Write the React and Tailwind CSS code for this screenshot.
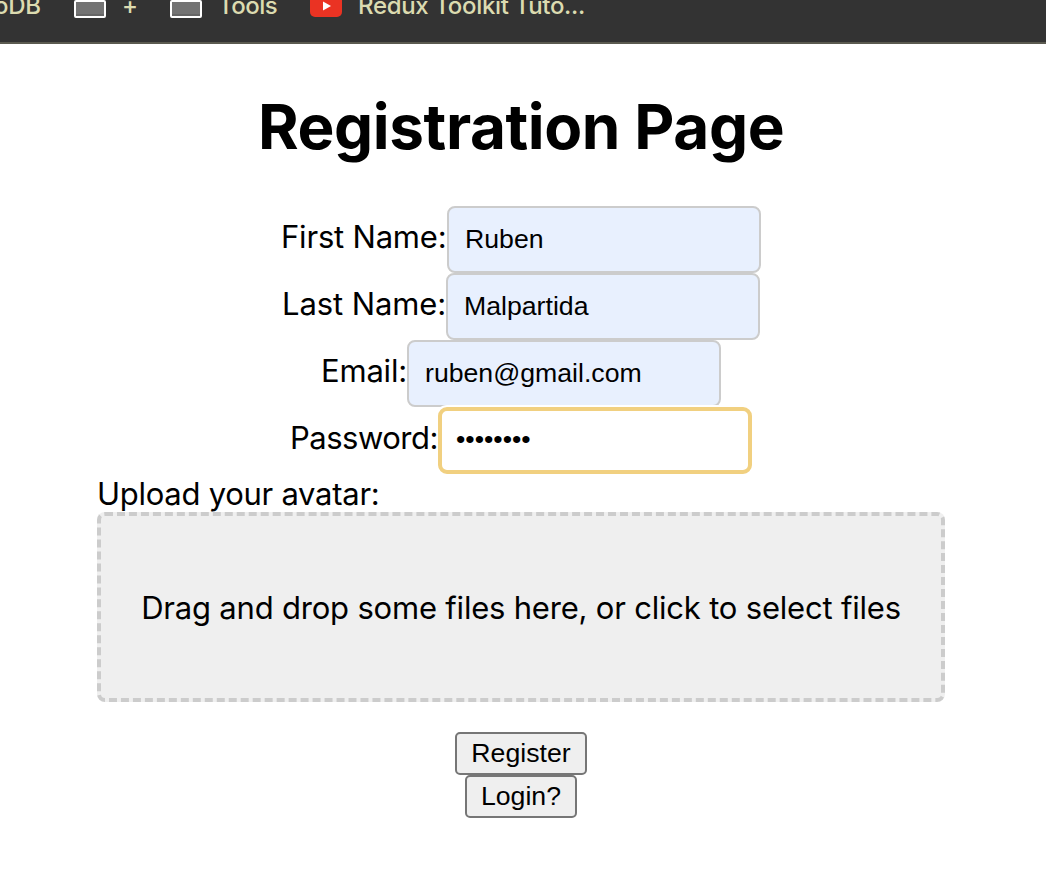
import React from "react";

const fields = [
  { label: "First Name:", value: "Ruben", type: "text", labelClass: "w-[166px] tracking-[-0.2px]", rowClass: "ml-[281px]" },
  { label: "Last Name:", value: "Malpartida", type: "text", labelClass: "w-[164px] tracking-[-0.1px]", rowClass: "ml-[282px]" },
  { label: "Email:", value: "ruben@gmail.com", type: "text", labelClass: "w-[87px] pl-px tracking-[-0.2px]", rowClass: "ml-[320px]" },
  { label: "Password:", value: "password", type: "password", labelClass: "relative z-10 w-[149px] pl-px tracking-[-0.5px]", rowClass: "ml-[289px]", focused: true },
];

function Folder() {
  return (
    <span className="block h-[18px] w-8 shrink-0 rounded-[2px] border-2 border-white bg-[#737373] shadow-[inset_0_-2px_0_#666]" />
  );
}

function BookmarksBar() {
  return (
    <header className="flex h-11 w-full overflow-hidden border-b-2 border-[#5b5a50] bg-[#333333] font-['Inter',sans-serif] text-[24px] font-medium leading-[28px] tracking-[-0.23px] text-[#dcdbb0]">
      <div className="-mt-2 flex h-7 items-start whitespace-nowrap">
        <span className="flex w-[74px] justify-start"><span className="-ml-[6px]">oDB</span></span>
        <span className="mt-2 block"><Folder /></span>
        <span className="ml-[16px] w-[48px]">+</span>
        <span className="mt-2 block"><Folder /></span>
        <span className="ml-[16px] w-[92px] tracking-[-0.5px]">Tools</span>
        <svg className="mt-[3px] h-[22px] w-8 shrink-0" viewBox="0 0 32 22">
          <rect width="32" height="22" rx="5" fill="#ea3323" />
          <path d="M13 6.5v9l8-4.5z" fill="#fff" />
        </svg>
        <span className="ml-4 tracking-[-0.33px]">Redux Toolkit Tuto...</span>
      </div>
    </header>
  );
}

function Field({ field }) {
  return (
    <div className={`flex h-[67px] items-center ${field.rowClass}`}>
      <label className={`-mt-1.5 shrink-0 whitespace-nowrap text-[31px] leading-[38px] ${field.labelClass}`}>{field.label}</label>
      <input
        type={field.type}
        defaultValue={field.value}
        className={
          field.focused
            ? "relative h-[67px] w-[314px] shrink-0 rounded-[9px] border-4 border-[#f1d080] bg-white pb-[3px] pl-[14px] pr-[14px] font-['Liberation_Sans',sans-serif] text-[26.67px] text-black shadow-[0_0_0_2px_#fff] outline-none"
            : "h-[67px] w-[314px] shrink-0 rounded-[8px] border-2 border-[#cccccc] bg-[#e8f0fe] px-4 font-['Liberation_Sans',sans-serif] text-[26.67px] text-black outline-none"
        }
      />
    </div>
  );
}

const buttonBase =
  "flex h-[43px] items-center justify-center rounded-[5px] border-2 border-[#767676] bg-[#efefef] font-['Liberation_Sans',sans-serif] text-[26.67px] leading-none text-black";

export default function App() {
  return (
    <div className="h-[876px] w-[1046px] overflow-hidden bg-white font-['Inter',sans-serif] text-black">
      <BookmarksBar />
      <main>
        <h1 className="ml-[258px] mt-[45px] h-[117px] whitespace-nowrap text-[62px] font-bold leading-[76px] tracking-[-0.4px]">Registration Page</h1>
        <form>
          {fields.map((field) => (
            <Field key={field.label} field={field} />
          ))}
          <p className="ml-[97px] h-[38px] whitespace-nowrap pt-[1px] text-[31px] leading-[38px] tracking-[-0.27px]">Upload your avatar:</p>
          <div className="ml-[97px] flex h-[190px] w-[848px] items-center justify-center rounded-[8px] border-4 border-dashed border-[#cccccc] bg-[#efefef]">
            <p className="mt-0.5 whitespace-nowrap text-[31px] leading-[38px] tracking-[-0.2px]">Drag and drop some files here, or click to select files</p>
          </div>
          <div className="ml-[455px] mt-[30px] flex w-[132px] flex-col items-center">
            <button type="button" className={`${buttonBase} w-[132px]`}>Register</button>
            <button type="button" className={`${buttonBase} w-[112px]`}>Login?</button>
          </div>
        </form>
      </main>
    </div>
  );
}
